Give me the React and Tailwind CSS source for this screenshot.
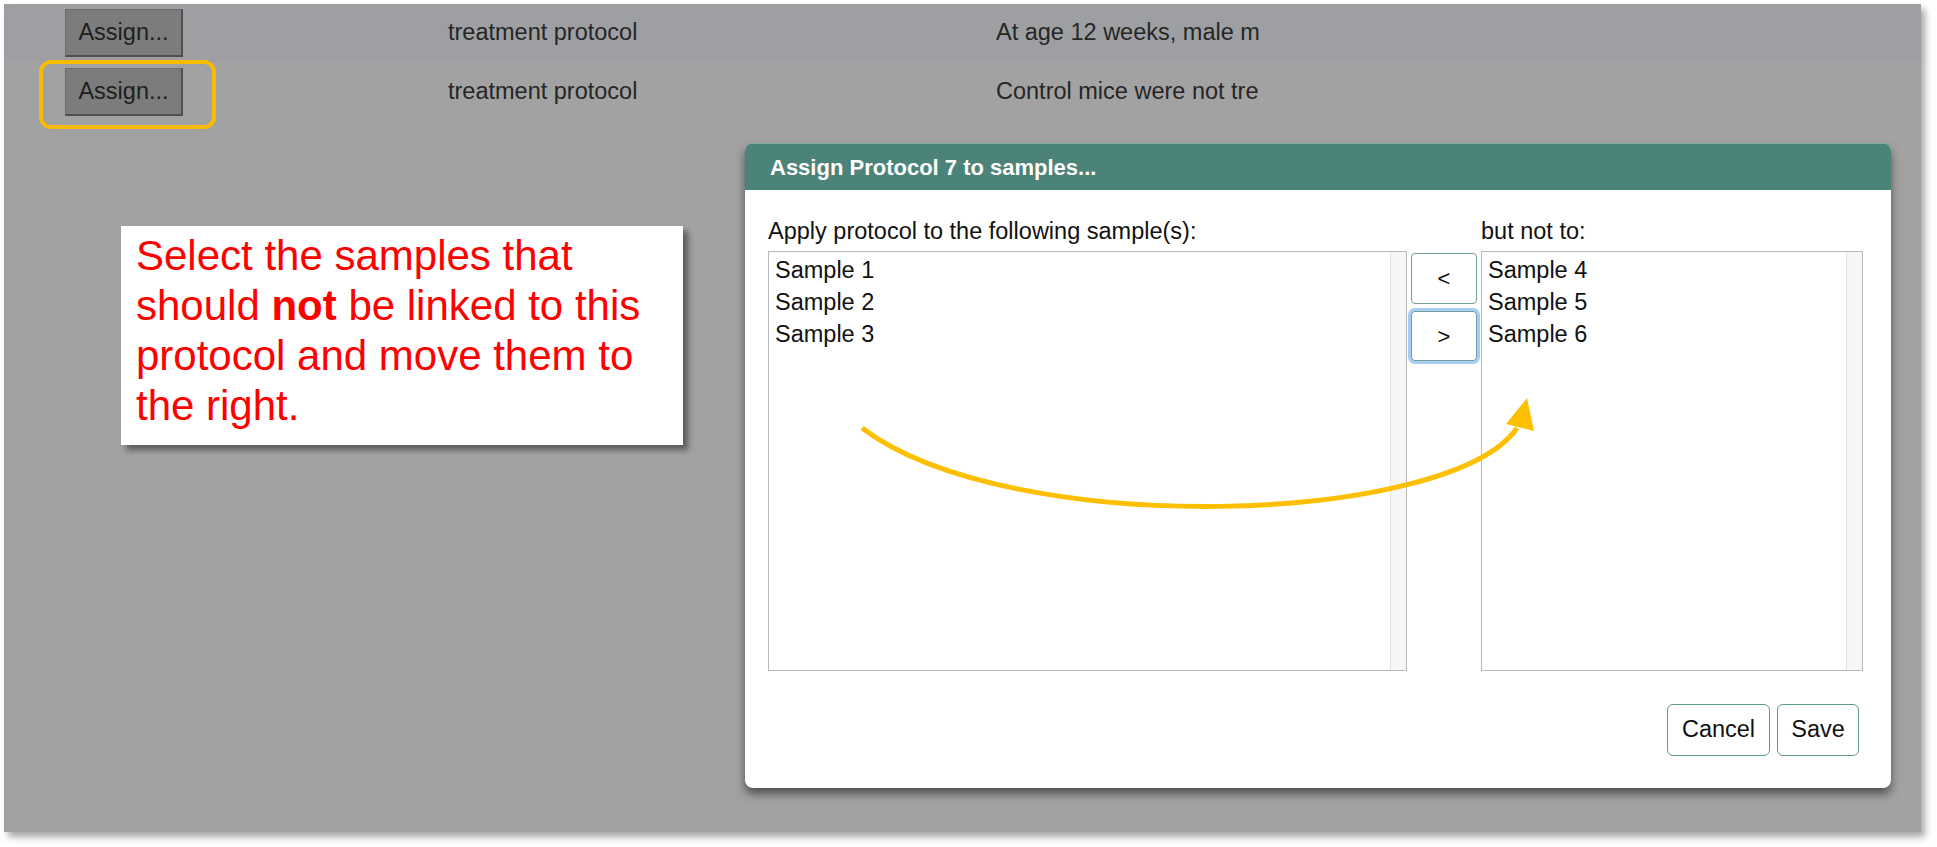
import React from "react";

const rows = [
  { kind: "treatment protocol", desc: "At age 12 weeks, male mice were treated", band: "bg-[#9e9fa3]", h: "h-[58px]" },
  { kind: "treatment protocol", desc: "Control mice were not treated", band: "bg-[#a2a2a2]", h: "h-[60px]" },
];

const leftSamples = ["Sample 1", "Sample 2", "Sample 3"];
const rightSamples = ["Sample 4", "Sample 5", "Sample 6"];

const SampleList = ({ items, width }) => (
  <div className={`relative h-[420px] border border-[#b8b8b8] bg-white ${width}`}>
    <div className="pl-[6px] pt-[2px]">
      {items.map((s) => (
        <div key={s} className="leading-[32px] text-[23.5px] text-[#111]">
          {s}
        </div>
      ))}
    </div>
    {/* scrollbar track */}
    <div className="absolute right-0 top-0 bottom-0 w-[16px] bg-[#f6f6f6] border-l border-[#e6e6e6]" />
  </div>
);

const App = () => {
  return (
    <div
      className="relative w-[1937px] h-[847px] bg-white overflow-hidden"
      style={{ fontFamily: '"Liberation Sans", Arial, sans-serif' }}
    >
      <div className="pt-[4px] pl-[4px]">
        <div className="w-[1917px] h-[828px] bg-[#a2a2a2] shadow-[4px_5px_7px_rgba(0,0,0,0.35)]">
          {rows.map((r, i) => (
            <div key={i} className={`flex items-center ${r.band} ${r.h}`}>
              <button className="ml-[61px] w-[118px] h-[48px] bg-[#7c7c7c] border border-[#6c6c6c] border-r-[#4f4f4f] border-b-[#4f4f4f] border-r-2 border-b-2 text-[23.5px] text-[#1e1e1e]">
                Assign...
              </button>
              <div className="ml-[265px] w-[548px] text-[23.5px] text-[#262626] whitespace-nowrap">
                {r.kind}
              </div>
              <div className="w-[263px] overflow-hidden whitespace-nowrap text-[23.5px] text-[#262626]">
                {r.desc}
              </div>
            </div>
          ))}
        </div>
      </div>

      {/* highlight round the second button */}
      <div className="absolute left-[39px] top-[60px] w-[177px] h-[69px] rounded-[12px] border-[4px] border-[#f8bb00]" />

      {/* callout */}
      <div className="absolute left-[121px] top-[226px] w-[562px] h-[219px] bg-white pl-[15px] pt-[5px] shadow-[5px_5px_6px_rgba(0,0,0,0.45)]">
        <p className="text-[42px] leading-[50px] text-[#ff0000]">
          Select the samples that
          <br />
          should <b>not</b> be linked to this
          <br />
          protocol and move them to
          <br />
          the right.
        </p>
      </div>

      {/* dialog */}
      <div className="absolute left-[745px] top-[143px] w-[1146px] h-[645px] bg-white rounded-[8px] overflow-hidden shadow-[0_6px_10px_rgba(0,0,0,0.5)]">
        <div className="h-[47px] bg-[#4b8379] border-t border-[#7fb3aa] flex items-center pl-[25px] text-white font-bold text-[22px]">
          Assign Protocol 7 to samples...
        </div>
        <div className="pl-[23px] pt-[25px]">
          <div className="grid grid-cols-[639px_66px_382px] gap-x-[4px]">
            <div className="leading-[32px] text-[23.5px] text-[#111]">
              Apply protocol to the following sample(s):
            </div>
            <div />
            <div className="leading-[32px] text-[23.5px] text-[#111]">but not to:</div>

            <div className="mt-[4px]">
              <SampleList items={leftSamples} width="w-[639px]" />
            </div>
            <div className="mt-[6px] flex flex-col gap-[7px]">
              <button className="h-[51px] bg-white border border-[#6f9f97] rounded-[4px] text-[22px] text-[#111]">
                &lt;
              </button>
              <button className="h-[50px] bg-white border border-[#6f9f97] rounded-[4px] text-[22px] text-[#111] shadow-[0_0_0_3px_#a6cdf5]">
                &gt;
              </button>
            </div>
            <div className="mt-[4px]">
              <SampleList items={rightSamples} width="w-[382px]" />
            </div>
          </div>
          <div className="flex justify-end gap-[7px] mt-[33px] mr-[32px]">
            <button className="w-[103px] h-[52px] bg-white border-[1.5px] border-[#5f998f] rounded-[6px] text-[23.5px] text-[#111]">
              Cancel
            </button>
            <button className="w-[82px] h-[52px] bg-white border-[1.5px] border-[#5f998f] rounded-[6px] text-[23.5px] text-[#111]">
              Save
            </button>
          </div>
        </div>
      </div>

      {/* arrow annotation */}
      <svg className="absolute left-0 top-0 pointer-events-none" width="1937" height="847" viewBox="0 0 1937 847">
        <path
          d="M 862 428 C 1010 540, 1450 525, 1517 428"
          fill="none"
          stroke="#fdbf00"
          strokeWidth="5"
        />
        <polygon points="1527,398 1506,424 1534,431" fill="#fdbf00" />
      </svg>
    </div>
  );
};

export default App;
